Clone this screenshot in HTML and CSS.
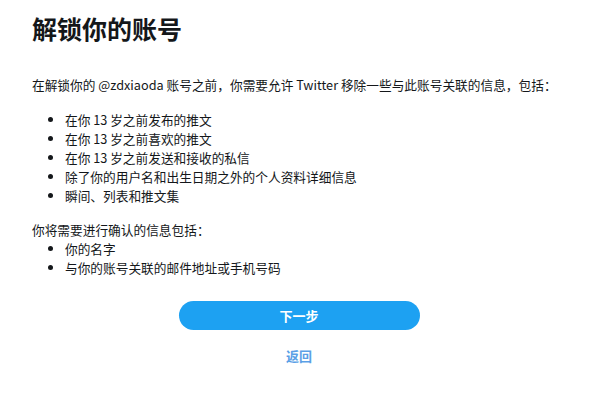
FILE: index.html
```html
<!DOCTYPE html>
<html lang="zh-CN">
<head>
<meta charset="utf-8">
<link rel="stylesheet" href="styles.css">
</head>
<body>
<main class="page">
  <h1 class="title">解锁你的账号</h1>
  <p class="intro">在解锁你的 @zdxiaoda 账号之前，你需要允许 Twitter 移除一些与此账号关联的信息，包括：</p>
  <ul class="list">
    <li>在你 13 岁之前发布的推文</li>
    <li>在你 13 岁之前喜欢的推文</li>
    <li>在你 13 岁之前发送和接收的私信</li>
    <li>除了你的用户名和出生日期之外的个人资料详细信息</li>
    <li>瞬间、列表和推文集</li>
  </ul>
  <p class="confirm">你将需要进行确认的信息包括：</p>
  <ul class="list list-tight">
    <li>你的名字</li>
    <li>与你的账号关联的邮件地址或手机号码</li>
  </ul>
  <div class="actions">
    <button class="btn-next">下一步</button>
    <a class="back">返回</a>
  </div>
</main>
</body>
</html>
```
FILE: styles.css
```css
html, body {
  margin: 0;
  padding: 0;
  background: #ffffff;
}
body {
  font-family: "Noto Sans CJK SC", "Noto Sans", sans-serif;
  color: #14171a;
}
.page {
  padding: 8px 0 0 32px;
  width: 534px;
}
.title {
  margin: 0;
  font-size: 25px;
  font-weight: 700;
  line-height: 40px;
  color: #14171a;
}
.intro {
  margin: 27px 0 0 0;
  font-size: 12.7px;
  line-height: 19px;
  white-space: nowrap;
  color: #14171a;
}
.list {
  margin: 16px 0 0 0;
  padding: 0 0 0 33px;
  font-size: 12.7px;
  line-height: 19px;
}
.confirm {
  margin: 15px 0 0 0;
  font-size: 12.7px;
  line-height: 19px;
}
.list-tight {
  margin-top: 0;
}
.actions {
  display: flex;
  flex-direction: column;
  align-items: center;
  margin-top: 24px;
}
.btn-next {
  width: 241px;
  height: 29px;
  border: none;
  border-radius: 15px;
  background: #1da1f2;
  color: #ffffff;
  font-family: "Noto Sans CJK SC", sans-serif;
  font-size: 13px;
  font-weight: 700;
  padding: 0;
}
.back {
  margin-top: 16px;
  font-size: 13px;
  font-weight: 700;
  line-height: 19px;
  color: #5a9fe6;
}
```
